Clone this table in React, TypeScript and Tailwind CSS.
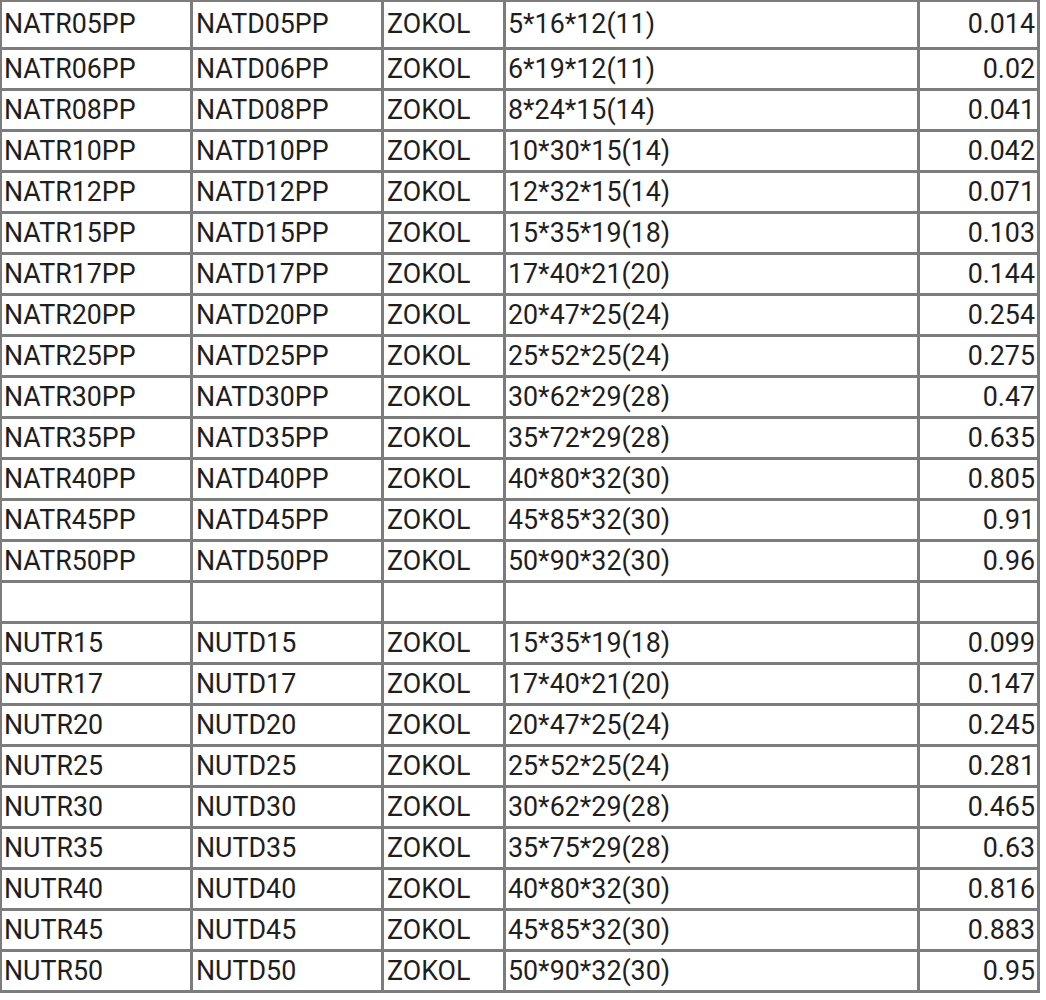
import React from 'react';

type Row = [string, string, string, string, string];

const rows: Row[] = [
  ['NATR05PP', 'NATD05PP', 'ZOKOL', '5*16*12(11)', '0.014'],
  ['NATR06PP', 'NATD06PP', 'ZOKOL', '6*19*12(11)', '0.02'],
  ['NATR08PP', 'NATD08PP', 'ZOKOL', '8*24*15(14)', '0.041'],
  ['NATR10PP', 'NATD10PP', 'ZOKOL', '10*30*15(14)', '0.042'],
  ['NATR12PP', 'NATD12PP', 'ZOKOL', '12*32*15(14)', '0.071'],
  ['NATR15PP', 'NATD15PP', 'ZOKOL', '15*35*19(18)', '0.103'],
  ['NATR17PP', 'NATD17PP', 'ZOKOL', '17*40*21(20)', '0.144'],
  ['NATR20PP', 'NATD20PP', 'ZOKOL', '20*47*25(24)', '0.254'],
  ['NATR25PP', 'NATD25PP', 'ZOKOL', '25*52*25(24)', '0.275'],
  ['NATR30PP', 'NATD30PP', 'ZOKOL', '30*62*29(28)', '0.47'],
  ['NATR35PP', 'NATD35PP', 'ZOKOL', '35*72*29(28)', '0.635'],
  ['NATR40PP', 'NATD40PP', 'ZOKOL', '40*80*32(30)', '0.805'],
  ['NATR45PP', 'NATD45PP', 'ZOKOL', '45*85*32(30)', '0.91'],
  ['NATR50PP', 'NATD50PP', 'ZOKOL', '50*90*32(30)', '0.96'],
  ['', '', '', '', ''],
  ['NUTR15', 'NUTD15', 'ZOKOL', '15*35*19(18)', '0.099'],
  ['NUTR17', 'NUTD17', 'ZOKOL', '17*40*21(20)', '0.147'],
  ['NUTR20', 'NUTD20', 'ZOKOL', '20*47*25(24)', '0.245'],
  ['NUTR25', 'NUTD25', 'ZOKOL', '25*52*25(24)', '0.281'],
  ['NUTR30', 'NUTD30', 'ZOKOL', '30*62*29(28)', '0.465'],
  ['NUTR35', 'NUTD35', 'ZOKOL', '35*75*29(28)', '0.63'],
  ['NUTR40', 'NUTD40', 'ZOKOL', '40*80*32(30)', '0.816'],
  ['NUTR45', 'NUTD45', 'ZOKOL', '45*85*32(30)', '0.883'],
  ['NUTR50', 'NUTD50', 'ZOKOL', '50*90*32(30)', '0.95'],
];

export default function App() {
  return (
    <div className="min-h-screen bg-white">
      <div className="grid w-fit grid-cols-[188px_188px_119px_411px_117px] gap-[3px] bg-[#7c7c7c] pt-[2px] pl-[2px] pr-[3px] pb-[3px] font-['Roboto',sans-serif] text-[26.8px] leading-none text-[#1e1e1e]">
        {rows.map((r, i) => {
          const h = i === 0 ? 'h-[45px]' : 'h-[38px]';
          return (
            <React.Fragment key={i}>
              <div className={`${h} flex items-center bg-white pl-[2px]`}>{r[0]}</div>
              <div className={`${h} flex items-center bg-white pl-[3px]`}>{r[1]}</div>
              <div className={`${h} flex items-center bg-white pl-[3px]`}>{r[2]}</div>
              <div className={`${h} flex items-center bg-white pl-[2px]`}>{r[3]}</div>
              <div className={`${h} flex items-center justify-end bg-white pr-[2px]`}>{r[4]}</div>
            </React.Fragment>
          );
        })}
      </div>
    </div>
  );
}
